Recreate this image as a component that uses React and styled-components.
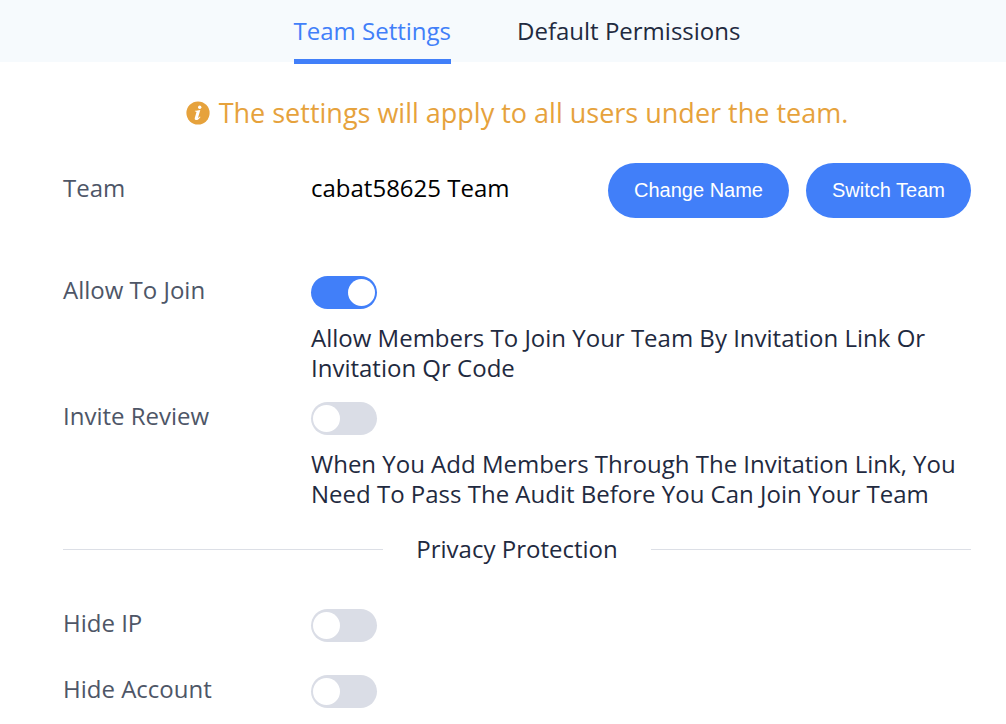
import React, { useState } from "react";
import styled, { createGlobalStyle } from "styled-components";

const GlobalStyle = createGlobalStyle`
  *, *::before, *::after { box-sizing: border-box; }
  body {
    margin: 0;
    background: #fff;
    color: #1f2a40;
    font-family: "Open Sans", "Noto Sans", sans-serif;
    font-size: 24px;
    line-height: 30px;
  }
`;

const TabBar = styled.nav`
  display: flex;
  justify-content: center;
  gap: 66px;
  height: 62px;
  padding: 0 35px 0 63px;
  background: #f6fafd;
`;

const Tab = styled.button`
  height: 64px;
  padding: 2px 0 0;
  border: 0;
  border-bottom: 5px solid ${(p) => (p.$active ? "#417ff9" : "transparent")};
  background: none;
  color: ${(p) => (p.$active ? "#417ff9" : "#1f2a40")};
  font: inherit;
  white-space: nowrap;
  cursor: pointer;
`;

const Content = styled.main`
  padding: 31px 35px 16px 63px;
`;

const Notice = styled.p`
  display: flex;
  align-items: center;
  justify-content: center;
  gap: 9px;
  margin: 0 0 30px;
  color: #e6a23c;
  font-size: 27px;
  line-height: 40px;

  svg { flex: none; }
`;

const Row = styled.div`
  display: grid;
  grid-template-columns: 248px 1fr;
  align-items: baseline;
  margin-bottom: ${(p) => p.$space}px;
`;

const SettingRow = styled(Row)`
  align-items: start;
`;

const Label = styled.label`
  color: #4e5667;
  line-height: 28px;
`;

const TeamLabel = styled.span`
  color: #4e5667;
`;

const TeamValue = styled.div`
  display: flex;
  align-items: baseline;
  gap: 17px;
`;

const TeamName = styled.span`
  flex: 1;
  color: #000;
`;

const PillButton = styled.button`
  height: 55px;
  padding: 0 26px;
  border: 0;
  border-radius: 28px;
  background: #417ff9;
  color: #fff;
  font-family: "Liberation Sans", Arial, sans-serif;
  font-size: 20px;
  white-space: nowrap;
  cursor: pointer;
`;

const Switch = styled.input.attrs({ type: "checkbox", role: "switch" })`
  appearance: none;
  display: flex;
  align-items: center;
  width: 66px;
  height: 33px;
  margin: 0;
  padding: 0 2px;
  border-radius: 17px;
  background: #dadde6;
  cursor: pointer;

  &::before {
    content: "";
    width: 27px;
    height: 27px;
    border-radius: 50%;
    background: #fff;
  }

  &:checked {
    justify-content: flex-end;
    background: #417ff9;
  }
`;

const Description = styled.p`
  margin: 14px 0 0;
`;

const Divider = styled.h2`
  display: flex;
  align-items: center;
  gap: 33px;
  margin: 25px 0 45px;
  font-size: 24px;
  font-weight: 400;

  &::before,
  &::after {
    content: "";
    flex: 1;
    height: 1px;
    background: #dcdfe6;
  }
`;

function InfoIcon() {
  return (
    <svg width="24" height="24" viewBox="0 0 24 24" aria-hidden="true">
      <circle cx="12" cy="12" r="11.6" fill="#e6a23c" />
      <circle cx="13.7" cy="6.2" r="1.7" fill="#fff" />
      <path
        d="M8.9 9.8 C10.7 9.7 12.2 9.4 14.3 9 L12.1 16.5 C11.9 17.3 12.4 17.1 13.9 15.5 L14.5 16 C12.5 18.6 11.2 19.2 10 19 C8.6 18.8 8.5 17.6 8.9 16.4 L10.4 11.4 C10.6 10.7 10.1 10.6 8.9 10.6 Z"
        fill="#fff"
      />
    </svg>
  );
}

function SwitchRow({ id, label, description, defaultChecked = false, space }) {
  return (
    <SettingRow $space={space}>
      <Label htmlFor={id}>{label}</Label>
      <div>
        <Switch id={id} defaultChecked={defaultChecked} />
        {description && <Description>{description}</Description>}
      </div>
    </SettingRow>
  );
}

const TABS = ["Team Settings", "Default Permissions"];

export default function App() {
  const [active, setActive] = useState(TABS[0]);

  return (
    <>
      <GlobalStyle />
      <TabBar>
        {TABS.map((tab) => (
          <Tab key={tab} type="button" $active={tab === active} onClick={() => setActive(tab)}>
            {tab}
          </Tab>
        ))}
      </TabBar>
      <Content>
        <Notice>
          <InfoIcon />
          The settings will apply to all users under the team.
        </Notice>
        <Row $space={58}>
          <TeamLabel>Team</TeamLabel>
          <TeamValue>
            <TeamName>cabat58625 Team</TeamName>
            <PillButton type="button">Change Name</PillButton>
            <PillButton type="button">Switch Team</PillButton>
          </TeamValue>
        </Row>
        <SwitchRow
          id="allow-join"
          label="Allow To Join"
          description="Allow Members To Join Your Team By Invitation Link Or Invitation Qr Code"
          defaultChecked
          space={19}
        />
        <SwitchRow
          id="invite-review"
          label="Invite Review"
          description="When You Add Members Through The Invitation Link, You Need To Pass The Audit Before You Can Join Your Team"
          space={0}
        />
        <Divider>Privacy Protection</Divider>
        <SwitchRow id="hide-ip" label="Hide IP" space={33} />
        <SwitchRow id="hide-account" label="Hide Account" space={0} />
      </Content>
    </>
  );
}
